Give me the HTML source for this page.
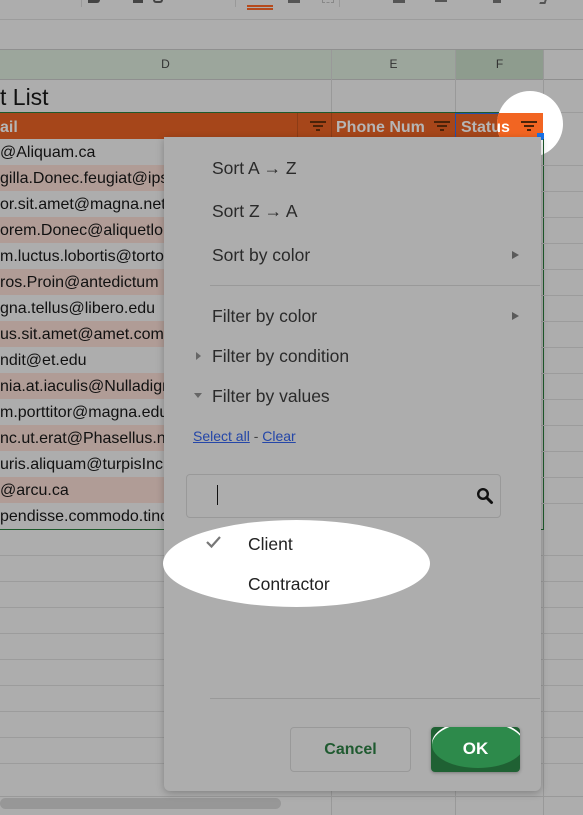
<!DOCTYPE html>
<html><head><meta charset="utf-8"><style>
*{margin:0;padding:0;box-sizing:border-box}
body{width:583px;height:815px;overflow:hidden;background:#adadad;font-family:"Liberation Sans",Arial,sans-serif;position:relative}
.a{position:absolute}
.hl{position:absolute;left:0;width:583px;height:1px;background:#9c9c9c}
.vl{position:absolute;top:50px;width:1px;background:#999}
.row{position:absolute;left:0;width:331px;height:26px;font-size:16px;color:#111;line-height:28px;white-space:nowrap;overflow:hidden}
.pk{background:#b09c96}
.fi{position:absolute;width:16px;height:11px}
.fi i{position:absolute;height:2px;background:#4a2309;left:50%;transform:translateX(-50%)}
.mi{position:absolute;left:212px;font-size:17.5px;color:#2a2a2a;font-family:"Liberation Sans",sans-serif}
.arr{position:absolute;left:512px;width:0;height:0;border-left:7px solid #5a5a5a;border-top:4px solid transparent;border-bottom:4px solid transparent}
</style></head><body>
<div class="a" style="left:88px;top:0;width:12px;height:3px;background:#444;border-radius:0 0 4px 0"></div>
<div class="a" style="left:133px;top:0;width:10px;height:3px;background:#444"></div>
<div class="a" style="left:153px;top:0;width:10px;height:3px;border:2px solid #444;border-top:none;border-radius:0 0 5px 5px"></div>
<div class="a" style="left:81px;top:0;width:1px;height:7px;background:#999"></div>
<div class="a" style="left:235px;top:0;width:1px;height:7px;background:#999"></div>
<div class="a" style="left:247px;top:5px;width:26px;height:2px;background:#b54a1c"></div>
<div class="a" style="left:247px;top:8px;width:26px;height:2px;background:#b54a1c"></div>
<div class="a" style="left:288px;top:0;width:12px;height:3px;background:#555"></div>
<div class="a" style="left:322px;top:0;width:12px;height:3px;border:1px dashed #888;border-top:none"></div>
<div class="a" style="left:339px;top:0;width:1px;height:7px;background:#999"></div>
<div class="a" style="left:393px;top:0;width:12px;height:3px;background:#555"></div>
<div class="a" style="left:435px;top:0;width:12px;height:2px;background:#555"></div>
<div class="a" style="left:493px;top:0;width:8px;height:3px;background:#555"></div>
<div class="a" style="left:540px;top:0;width:6px;height:4px;border-right:2px solid #555;border-bottom:2px solid #555;transform:skewX(-20deg)"></div>
<div class="hl" style="top:19px"></div>
<div class="hl" style="top:49px;background:#8f8f8f"></div>
<div class="a" style="left:0;top:50px;width:331px;height:29px;background:#9ca69c;text-align:center;line-height:29px;font-size:12px;color:#333">D</div>
<div class="a" style="left:332px;top:50px;width:123px;height:29px;background:#9ca69c;text-align:center;line-height:29px;font-size:12px;color:#333">E</div>
<div class="a" style="left:456px;top:50px;width:87px;height:29px;background:#8e9c8e;text-align:center;line-height:29px;font-size:12px;color:#333">F</div>
<div class="hl" style="top:79px;background:#8f8f8f"></div>
<div class="vl" style="left:331px;height:765px"></div>
<div class="vl" style="left:455px;height:765px"></div>
<div class="vl" style="left:543px;height:765px"></div>
<div class="hl" style="top:112px"></div>
<div class="hl" style="top:555px"></div><div class="hl" style="top:581px"></div><div class="hl" style="top:607px"></div><div class="hl" style="top:633px"></div><div class="hl" style="top:659px"></div><div class="hl" style="top:685px"></div><div class="hl" style="top:711px"></div><div class="hl" style="top:737px"></div><div class="hl" style="top:763px"></div>
<div class="a" style="left:0;top:84px;font-size:23px;color:#111">t List</div>
<div class="a" style="left:0;top:112px;width:544px;height:1px;background:#1e5a2c"></div>
<div class="a" style="left:0;top:113px;width:543px;height:26px;background:#a6461a"></div>
<div class="a" style="left:297px;top:113px;width:1px;height:26px;background:#8c3c16"></div>
<div class="a" style="left:331px;top:113px;width:1px;height:26px;background:#8c3c16"></div>
<div class="a" style="left:0;top:119px;font-size:16px;font-weight:bold;color:#b5b5b5">ail</div>
<div class="a" style="left:336px;top:119px;font-size:16px;font-weight:bold;color:#b5b5b5;width:90px;overflow:hidden;white-space:nowrap">Phone Number</div>
<div class="a" style="left:455px;top:113px;width:89px;height:26px;border:1px solid #2050b0"></div>
<div class="a" style="left:461px;top:119px;font-size:16px;font-weight:bold;color:#b5b5b5">Status</div>
<div class="fi" style="left:310px;top:121px"><i style="top:0;width:16px"></i><i style="top:4px;width:10px"></i><i style="top:8px;width:4px"></i></div>
<div class="fi" style="left:434px;top:121px"><i style="top:0;width:16px"></i><i style="top:4px;width:10px"></i><i style="top:8px;width:4px"></i></div>
<div class="a" style="left:497px;top:91px;width:66px;height:66px;border-radius:50%;background:#fff;overflow:hidden">
  <div class="a" style="left:-42px;top:22px;width:88px;height:26px;background:#f26522"></div>
  <div class="a" style="left:-36px;top:28px;font-size:16px;font-weight:bold;color:#fff">Status</div>
  <div class="fi" style="left:24px;top:30px"><i style="top:0;width:16px"></i><i style="top:4px;width:10px"></i><i style="top:8px;width:4px"></i></div>
  <div class="a" style="left:46px;top:48px;width:1px;height:30px;background:#1e7a3a"></div>
  <div class="a" style="left:40px;top:42px;width:7px;height:7px;background:#1a73e8"></div>
</div>
<div class="a" style="left:543px;top:139px;width:1px;height:391px;background:#1e5a2c"></div>
<div class="row" style="top:139px">@Aliquam.ca</div>
<div class="row pk" style="top:165px">gilla.Donec.feugiat@ipsum</div>
<div class="row" style="top:191px">or.sit.amet@magna.net</div>
<div class="row pk" style="top:217px">orem.Donec@aliquetlorem</div>
<div class="row" style="top:243px">m.luctus.lobortis@tortor</div>
<div class="row pk" style="top:269px">ros.Proin@antedictum</div>
<div class="row" style="top:295px">gna.tellus@libero.edu</div>
<div class="row pk" style="top:321px">us.sit.amet@amet.com</div>
<div class="row" style="top:347px">ndit@et.edu</div>
<div class="row pk" style="top:373px">nia.at.iaculis@Nulladign</div>
<div class="row" style="top:399px">m.porttitor@magna.edu</div>
<div class="row pk" style="top:425px">nc.ut.erat@Phasellus.net</div>
<div class="row" style="top:451px">uris.aliquam@turpisInc</div>
<div class="row pk" style="top:477px">@arcu.ca</div>
<div class="row" style="top:503px">pendisse.commodo.tincidunt</div>
<div class="hl" style="top:165px;left:331px;width:252px"></div><div class="hl" style="top:191px;left:331px;width:252px"></div><div class="hl" style="top:217px;left:331px;width:252px"></div><div class="hl" style="top:243px;left:331px;width:252px"></div><div class="hl" style="top:269px;left:331px;width:252px"></div><div class="hl" style="top:295px;left:331px;width:252px"></div><div class="hl" style="top:321px;left:331px;width:252px"></div><div class="hl" style="top:347px;left:331px;width:252px"></div><div class="hl" style="top:373px;left:331px;width:252px"></div><div class="hl" style="top:399px;left:331px;width:252px"></div><div class="hl" style="top:425px;left:331px;width:252px"></div><div class="hl" style="top:451px;left:331px;width:252px"></div><div class="hl" style="top:477px;left:331px;width:252px"></div><div class="hl" style="top:503px;left:331px;width:252px"></div>
<div class="a" style="left:0;top:529px;width:544px;height:1px;background:#1e5a2c"></div>
<div class="a" style="left:0;top:796px;width:583px;height:1px;background:#999"></div>
<div class="a" style="left:0;top:798px;width:281px;height:11px;border-radius:6px;background:#979797"></div>
<div class="a" style="left:164px;top:137px;width:377px;height:654px;background:#adadad;border-radius:0 0 6px 6px;box-shadow:0 2px 8px rgba(0,0,0,.25)"></div>
<div class="mi" style="top:158px">Sort A → Z</div>
<div class="mi" style="top:201px">Sort Z → A</div>
<div class="mi" style="top:245px">Sort by color</div>
<div class="arr" style="top:251px"></div>
<div class="a" style="left:210px;top:285px;width:330px;height:1px;background:#999"></div>
<div class="mi" style="top:306px">Filter by color</div>
<div class="arr" style="top:312px"></div>
<div class="a" style="left:196px;top:352px;border-left:5px solid #666;border-top:4px solid transparent;border-bottom:4px solid transparent"></div>
<div class="mi" style="top:346px">Filter by condition</div>
<div class="a" style="left:194px;top:393px;border-top:5px solid #666;border-left:4px solid transparent;border-right:4px solid transparent"></div>
<div class="mi" style="top:386px">Filter by values</div>
<div class="a" style="left:193px;top:428px;font-size:14px;color:#2446a8"><u>Select all</u> <span style="color:#444">-</span> <u>Clear</u></div>
<div class="a" style="left:186px;top:474px;width:315px;height:44px;border:1px solid #999;border-radius:4px"></div>
<div class="a" style="left:217px;top:485px;width:1px;height:20px;background:#111"></div>
<svg class="a" style="left:476px;top:487px" width="18" height="18" viewBox="0 0 18 18"><circle cx="7" cy="7" r="4.8" fill="none" stroke="#111" stroke-width="2.4"/><path d="M10.5 10.5L15.5 15.5" stroke="#111" stroke-width="3" stroke-linecap="round"/></svg>
<div class="a" style="left:163px;top:520px;width:267px;height:87px;border-radius:50%;background:#fff"></div>
<svg class="a" style="left:206px;top:535px" width="16" height="14" viewBox="0 0 16 14"><path d="M1 7L5.5 11.5L14 2" fill="none" stroke="#777" stroke-width="2.2"/></svg>
<div class="a" style="left:248px;top:534px;font-size:17.5px;color:#222">Client</div>
<div class="a" style="left:248px;top:574px;font-size:17.5px;color:#222">Contractor</div>
<div class="a" style="left:210px;top:698px;width:330px;height:1px;background:#999"></div>
<div class="a" style="left:290px;top:727px;width:121px;height:45px;border:1px solid #999;border-radius:4px;text-align:center;line-height:43px;font-size:16px;font-weight:bold;color:#1f5a30">Cancel</div>
<div class="a" style="left:431px;top:727px;width:89px;height:45px;border-radius:4px;background:#1f6133;box-shadow:0 1px 3px rgba(0,0,0,.3);overflow:hidden">
  <div class="a" style="left:1px;top:-5px;width:92px;height:46px;border-radius:50%;background:#2d8a4b;box-shadow:0 -2px 0 #fff"></div>
  <div class="a" style="left:0;top:0;width:89px;height:45px;text-align:center;line-height:43px;font-size:17px;font-weight:bold;color:#fff">OK</div>
</div>
</body></html>
